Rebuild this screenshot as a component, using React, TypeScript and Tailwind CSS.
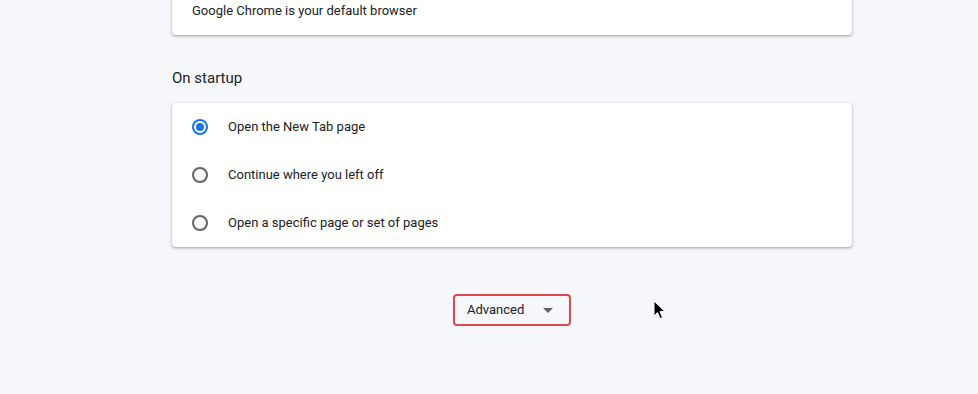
const font = { fontFamily: "Roboto, 'Noto Sans', sans-serif" };

const options = [
  "Open the New Tab page",
  "Continue where you left off",
  "Open a specific page or set of pages",
];

function Radio({ checked }: { checked: boolean }) {
  return (
    <span
      className={
        "flex h-4 w-4 items-center justify-center rounded-full border-2 " +
        (checked ? "border-[#1a73e8]" : "border-[#5f6368]")
      }
    >
      {checked && <span className="h-2 w-2 rounded-full bg-[#1a73e8]" />}
    </span>
  );
}

export default function App() {
  return (
    <div
      className="relative h-[394px] w-full overflow-hidden bg-[#f6f7fa] text-[#202124]"
      style={font}
    >
      <div className="ml-[172px] w-[680px]">
        <div className="-mt-[14px] flex h-[49px] items-center rounded bg-white px-5 text-[13px] shadow-[0_1px_2px_0_rgba(60,64,67,0.3),0_1px_3px_1px_rgba(60,64,67,0.15)]">
          Google Chrome is your default browser
        </div>

        <h2 className="mt-[33px] mb-[15px] text-[15px] leading-[20px]">On startup</h2>

        <div className="rounded bg-white shadow-[0_1px_2px_0_rgba(60,64,67,0.3),0_1px_3px_1px_rgba(60,64,67,0.15)]">
          {options.map((label, i) => (
            <div key={label} className="flex h-12 items-center px-5 text-[13px]">
              <Radio checked={i === 0} />
              <span className="ml-5">{label}</span>
            </div>
          ))}
        </div>

        <div className="mt-[47px] flex justify-center">
          <button className="flex h-8 w-[118px] items-center justify-between rounded border-2 border-[#e0484f] pl-[12px] pr-4 text-[13px] text-[#202124]">
            <span>Advanced</span>
            <svg width="10" height="5" viewBox="0 0 10 5">
              <path d="M0 0 L10 0 L5 5 Z" fill="#5f6368" />
            </svg>
          </button>
        </div>
      </div>

      <svg
        className="absolute left-[653px] top-[300px]"
        width="14"
        height="20"
        viewBox="0 0 14 20"
      >
        <path
          d="M1 1 L1 16 L4.5 12.5 L7 18.5 L9.5 17.5 L7 11.5 L12 11.5 Z"
          fill="#000"
          stroke="#fff"
          strokeWidth="1"
        />
      </svg>
    </div>
  );
}
